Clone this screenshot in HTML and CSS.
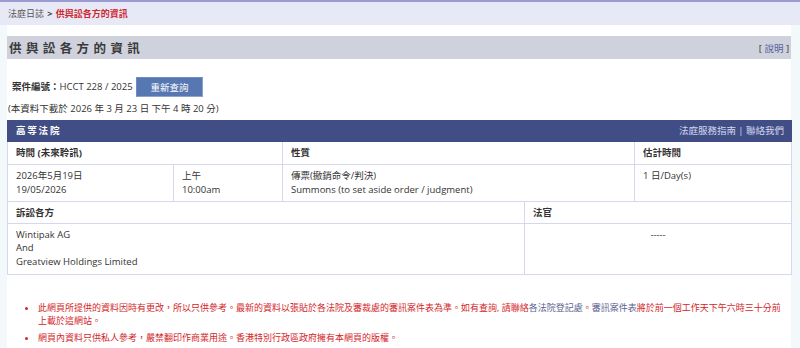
FILE: index.html
```html
<!DOCTYPE html>
<html lang="zh-Hant">
<head>
  <meta charset="UTF-8">
  <meta name="viewport" content="width=device-width, initial-scale=1.0">
  <title>供與訟各方的資訊</title>
  <link rel="stylesheet" href="styles.css">
</head>
<body>
  <div class="topline"></div>
  <div class="crumbs">
    <a href="#">法庭日誌</a>
    <span class="sep">&gt;</span>
    <span class="current">供與訟各方的資訊</span>
  </div>

  <div class="page">
    <div class="title-bar">
      <h1>供與訟各方的資訊</h1>
      <span class="help">[ <a href="#">說明</a> ]</span>
    </div>

    <div class="case-row">
      <b>案件編號：</b>HCCT 228 / 2025
      <button class="search-btn">重新查詢</button>
    </div>
    <p class="stamp">(本資料下載於 2026 年 3 月 23 日 下午 4 時 20 分)</p>

    <table class="hearing">
      <colgroup>
        <col class="c1"><col class="c2"><col class="c3"><col class="c4"><col class="c5">
      </colgroup>
      <tr class="court">
        <td colspan="5">
          <div class="court-bar">
            <span class="court-name">高等法院</span>
            <span class="court-links"><a href="#">法庭服務指南</a> | <a href="#">聯絡我們</a></span>
          </div>
        </td>
      </tr>
      <tr class="head">
        <th colspan="2">時間 (未來聆訊)</th>
        <th colspan="2">性質</th>
        <th>估計時間</th>
      </tr>
      <tr>
        <td>2026年5月19日<br>19/05/2026</td>
        <td>上午<br>10:00am</td>
        <td colspan="2">傳票(撤銷命令/判決)<br>Summons (to set aside order / judgment)</td>
        <td>1 日/Day(s)</td>
      </tr>
      <tr class="head">
        <th colspan="3">訴訟各方</th>
        <th colspan="2">法官</th>
      </tr>
      <tr class="parties">
        <td colspan="3">Wintipak AG<br>And<br>Greatview Holdings Limited</td>
        <td colspan="2" class="judge">-----</td>
      </tr>
    </table>

    <ul class="notes">
      <li>此網頁所提供的資料因時有更改，所以只供參考。最新的資料以張貼於各法院及審裁處的審訊案件表為準。如有查詢, 請聯絡<a href="#">各法院登記處</a>。<a href="#">審訊案件表</a>將於前一個工作天下午六時三十分前<br>上載於這網站。</li>
      <li>網頁內資料只供私人參考，嚴禁翻印作商業用途。香港特別行政區政府擁有本網頁的版權。</li>
    </ul>
  </div>
</body>
</html>
```

FILE: styles.css
```css
body {
  margin: 0;
  font-family: "Open Sans", "Noto Sans CJK TC", sans-serif;
  font-size: 9.5px;
  color: #333;
  background: #f3f8fb;
}

a {
  text-decoration: none;
}

.topline {
  height: 2px;
  background: #9b9bd1;
}

.crumbs {
  height: 23px;
  line-height: 23px;
  padding-left: 8px;
  font-size: 9px;
  background: #e8e9f6;
}

.crumbs a {
  color: #555;
}

.crumbs .sep {
  margin: 0 1px;
  font-weight: bold;
  color: #444;
}

.crumbs .current {
  font-weight: bold;
  color: #d0262e;
}

.page {
  width: 784px;
  min-height: 312px;
  margin-left: 7px;
  padding-top: 11px;
  background: #fff;
}

.title-bar {
  display: flex;
  justify-content: space-between;
  align-items: center;
  height: 23px;
  padding: 0 2px;
  background: #cfd1dc;
}

.title-bar h1 {
  margin: 0;
  font-size: 12.5px;
  letter-spacing: 4.4px;
  color: #3a3a3a;
}

.help {
  color: #333;
}

.help a {
  color: #55629a;
}

.case-row {
  height: 20px;
  margin-top: 18px;
  padding-left: 5px;
  line-height: 20px;
}

.search-btn {
  width: 67px;
  height: 20px;
  margin-left: 1px;
  padding: 0;
  vertical-align: top;
  font-family: inherit;
  font-size: 9.5px;
  color: #fff;
  background: #5677b1;
  border: 1px solid #8ea2ca;
  border-top-color: #6f8cc0;
  border-left-color: #6f8cc0;
}

.stamp {
  margin: 5px 0 0;
  padding-left: 1px;
  line-height: 14px;
}

.hearing {
  width: 784px;
  margin-top: 4px;
  table-layout: fixed;
  border-collapse: collapse;
  border: 1px solid #d6d7ee;
}

.c1 { width: 166px; }
.c2 { width: 109px; }
.c3 { width: 242px; }
.c4 { width: 110px; }
.c5 { width: 157px; }

.hearing th,
.hearing td {
  padding: 4px 8px 3px;
  line-height: 14.5px;
  text-align: left;
  vertical-align: top;
  border: 1px solid #d6d7ee;
}

.hearing .court td {
  padding: 0;
  background: #404e85;
  border-color: #404e85;
}

.court-bar {
  display: flex;
  justify-content: space-between;
  align-items: center;
  height: 20px;
  padding: 0 7px 0 8px;
}

.court-name {
  font-weight: bold;
  letter-spacing: 1.8px;
  color: #fff;
}

.court-links,
.court-links a {
  color: #d3d7ee;
}

.hearing .parties td {
  padding-top: 4px;
  padding-bottom: 6px;
  line-height: 13.3px;
}

.hearing .judge {
  text-align: center;
}

.notes {
  margin: 26px 0 0;
  padding: 0 8px 0 31px;
  font-size: 9px;
  line-height: 13px;
  color: #d3262a;
}

.notes li {
  margin-bottom: 4px;
}

.notes a {
  color: #5b6390;
}
```
